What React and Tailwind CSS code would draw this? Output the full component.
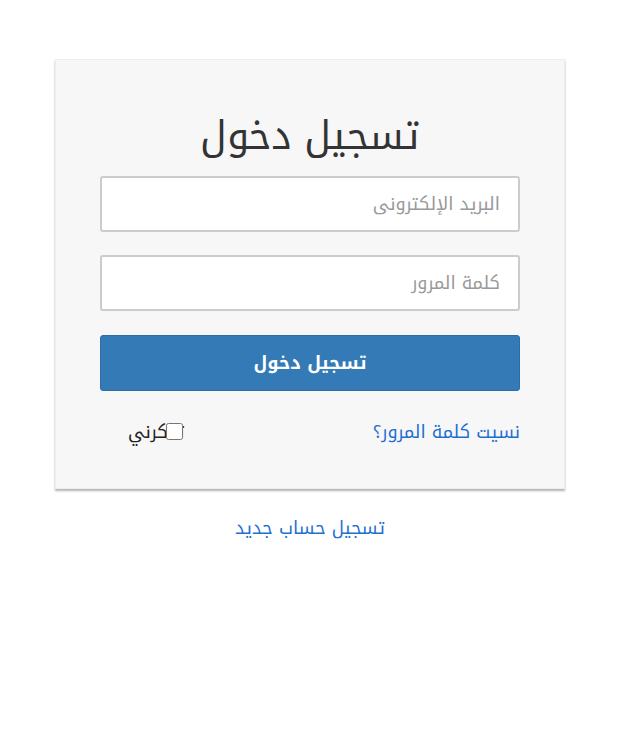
import React from "react";

const App = () => {
  return (
    <div dir="rtl" className="min-h-[756px] bg-white font-['Noto_Kufi_Arabic','Noto_Sans','DejaVu_Sans',sans-serif]">
      <div className="mr-[53px] w-[510px] pt-[59px]">
        <div className="bg-[#f7f7f7] px-[44px] pt-[48px] pb-[42px] shadow-[0_2px_2px_rgba(0,0,0,0.3)] border border-[#eeeeee]">
          <h2 className="mb-[12px] text-center text-[39px] leading-[56px] text-[#333]">تسجيل دخول</h2>
          <form className="flex flex-col gap-[23px]" onSubmit={(e) => e.preventDefault()}>
            <input
              type="email"
              placeholder="البريد الإلكترونى"
              className="h-[56px] w-full rounded-[3px] border-2 border-[#cccccc] bg-white px-[18px] text-[18px] text-[#555] placeholder:text-[#999] outline-none"
            />
            <input
              type="password"
              placeholder="كلمة المرور"
              className="h-[56px] w-full rounded-[3px] border-2 border-[#cccccc] bg-white px-[18px] text-[18px] text-[#555] placeholder:text-[#999] outline-none"
            />
            <button
              type="submit"
              className="mt-[1px] h-[56px] w-full rounded-[3px] border border-[#2e6da4] bg-[#337ab7] text-[18px] font-bold text-white"
            >
              تسجيل دخول
            </button>
          </form>
          <div className="mt-[28px] flex items-center justify-between">
            <a href="#" className="text-[18px] text-[#1f6fd1]">نسيت كلمة المرور؟</a>
            <label className="relative ml-[28px] pr-[2px] text-[18px] text-[#222]">
              تذكرني
              <input
                type="checkbox"
                className="absolute right-[4px] top-[4px] m-0 h-[17px] w-[17px]"
              />
            </label>
          </div>
        </div>
        <div className="mt-[26px] text-center">
          <a href="#" className="text-[18px] text-[#1f6fd1]">تسجيل حساب جديد</a>
        </div>
      </div>
    </div>
  );
};

export default App;
